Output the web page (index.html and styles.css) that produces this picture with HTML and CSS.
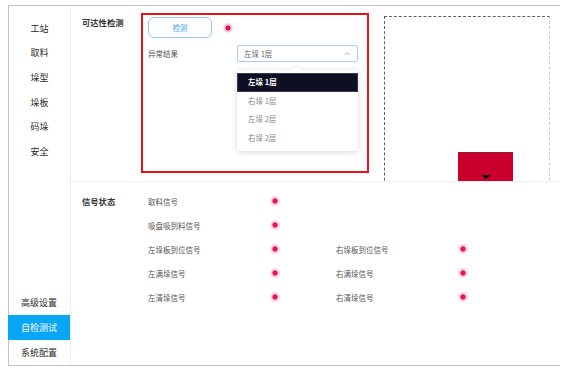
FILE: index.html
```html
<!DOCTYPE html>
<html lang="zh-CN">
<head>
    <meta charset="UTF-8">
    <meta name="viewport" content="width=device-width, initial-scale=1.0">
    <title>自检测试</title>
    <link rel="stylesheet" href="styles.css">
</head>
<body>
    <div class="frame">
        <!-- Left menu -->
        <div class="sidebar">
            <div class="menu">
                <div class="menu-item">工站</div>
                <div class="menu-item">取料</div>
                <div class="menu-item">垛型</div>
                <div class="menu-item">垛板</div>
                <div class="menu-item">码垛</div>
                <div class="menu-item">安全</div>
            </div>
            <div class="menu menu-bottom">
                <div class="menu-item tall">高级设置</div>
                <div class="menu-item tall active">自检测试</div>
                <div class="menu-item tall">系统配置</div>
            </div>
        </div>

        <div class="main">
            <!-- Reachability check -->
            <div class="section reach">
                <div class="sec-label">可达性检测</div>
                <div class="check-box">
                    <div class="check-row">
                        <button class="btn-check">检测</button>
                        <span class="dot dot-gap"></span>
                    </div>
                    <div class="result-row">
                        <span class="field-label">异常结果</span>
                        <div class="select">
                            <span>左垛 1层</span>
                            <svg class="chevron" width="7" height="5" viewBox="0 0 7 5">
                                <polyline points="0.8,4 3.5,1.3 6.2,4" fill="none" stroke="#aaa" stroke-width="0.9"/>
                            </svg>
                            <div class="dropdown">
                                <div class="caret"></div>
                                <div class="option selected">左垛 1层</div>
                                <div class="option">右垛 1层</div>
                                <div class="option">左垛 2层</div>
                                <div class="option">右垛 2层</div>
                            </div>
                        </div>
                    </div>
                </div>
                <div class="canvas">
                    <div class="pallet">
                        <span class="arrow"></span>
                    </div>
                </div>
            </div>

            <!-- Signal status -->
            <div class="section signals">
                <div class="sec-label sig-label">信号状态</div>
                <div class="sig-list">
                    <div class="sig-row">
                        <div class="sig"><span class="sig-name">取料信号</span><span class="dot"></span></div>
                    </div>
                    <div class="sig-row">
                        <div class="sig"><span class="sig-name">吸盘吸到料信号</span><span class="dot"></span></div>
                    </div>
                    <div class="sig-row">
                        <div class="sig"><span class="sig-name">左垛板到位信号</span><span class="dot"></span></div>
                        <div class="sig"><span class="sig-name">右垛板到位信号</span><span class="dot"></span></div>
                    </div>
                    <div class="sig-row">
                        <div class="sig"><span class="sig-name">左满垛信号</span><span class="dot"></span></div>
                        <div class="sig"><span class="sig-name">右满垛信号</span><span class="dot"></span></div>
                    </div>
                    <div class="sig-row">
                        <div class="sig"><span class="sig-name">左清垛信号</span><span class="dot"></span></div>
                        <div class="sig"><span class="sig-name">右清垛信号</span><span class="dot"></span></div>
                    </div>
                </div>
            </div>
        </div>
    </div>
</body>
</html>
```

FILE: styles.css
```css
body {
    margin: 5px 8px;
    background: #fff;
    font-family: "Noto Sans CJK SC", "Noto Sans", sans-serif;
    color: #333;
}
.frame {
    width: 553px;
    height: 361px;
    box-sizing: border-box;
    border: 1px solid #c4c4c4;
    display: flex;
}
.sidebar {
    width: 62px;
    flex-shrink: 0;
    box-sizing: border-box;
    border-right: 1px solid #eeeeee;
    display: flex;
    flex-direction: column;
    justify-content: space-between;
}
.menu {
    padding-top: 10.5px;
}
.menu-bottom {
    padding-top: 0;
    margin-left: -1px;
}
.menu-item {
    height: 24.7px;
    line-height: 24.7px;
    text-align: center;
    font-size: 9px;
    color: #2a2a2a;
}
.menu-item.tall {
    height: 25px;
    line-height: 25px;
}
.menu-item.active {
    background: #0aa6f6;
    color: #fff;
}
.main {
    flex: 1;
    display: flex;
    flex-direction: column;
}
.section {
    display: flex;
    box-sizing: border-box;
}
.reach {
    height: 176px;
    padding-top: 7px;
    border-bottom: 1px solid #efefef;
    overflow: hidden;
}
.sec-label {
    width: 70px;
    flex-shrink: 0;
    box-sizing: border-box;
    padding: 3px 0 0 11px;
    line-height: 12px;
    font-size: 8.3px;
    font-weight: bold;
    color: #333;
}
.check-box {
    width: 228px;
    height: 160px;
    flex-shrink: 0;
    box-sizing: border-box;
    border: 2px solid #e3141c;
    padding: 2px 5px;
}
.check-row {
    display: flex;
    align-items: center;
    height: 21px;
}
.btn-check {
    width: 64px;
    height: 21px;
    border: 1px solid #8fc8ee;
    border-radius: 6px;
    background: #fff;
    color: #3fa3e8;
    font-family: inherit;
    font-size: 7.5px;
    padding: 0;
}
.dot {
    width: 10px;
    height: 10px;
    flex-shrink: 0;
    border-radius: 50%;
    background: radial-gradient(circle, #e8144a 0 2.2px, #fbc3d1 2.9px, #fde2e9 5px);
}
.dot-gap {
    margin-left: 11px;
}
.result-row {
    display: flex;
    align-items: center;
    margin-top: 7px;
    height: 17px;
}
.field-label {
    width: 89px;
    font-size: 7.5px;
    color: #555;
}
.select {
    position: relative;
    width: 121px;
    height: 17px;
    box-sizing: border-box;
    border: 1px solid #a9d0f2;
    border-radius: 2px;
    padding: 0 6px;
    display: flex;
    align-items: center;
    justify-content: space-between;
    font-size: 7.5px;
    color: #666;
}
.dropdown {
    position: absolute;
    top: 24px;
    left: -1px;
    width: 121px;
    padding: 3px 0 4px;
    background: #fff;
    border-radius: 2px;
    box-shadow: 0 1px 6px rgba(0, 0, 0, 0.16);
}
.caret {
    position: absolute;
    top: -3px;
    left: 57px;
    width: 6px;
    height: 6px;
    background: #fff;
    transform: rotate(45deg);
    box-shadow: -1px -1px 2px rgba(0, 0, 0, 0.06);
}
.option {
    position: relative;
    height: 18.5px;
    line-height: 18.5px;
    padding-left: 11px;
    font-size: 7.5px;
    color: #888;
}
.option.selected {
    background: #0f0f24;
    color: #fff;
    font-weight: bold;
    box-shadow: inset 0 0 0 1px #3a3a52;
}
.canvas {
    position: relative;
    width: 166px;
    height: 200px;
    flex-shrink: 0;
    box-sizing: border-box;
    margin: 3px 0 0 15px;
    border-top: 1px dashed #5a6070;
    border-left: 1px dashed #5a6070;
    border-right: 1px dashed #cccccc;
}
.pallet {
    position: absolute;
    left: 73px;
    top: 135px;
    width: 55px;
    height: 40px;
    background: #c9002b;
    border-top: 1px solid #8a1a30;
    display: flex;
    justify-content: center;
}
.arrow {
    margin-top: 22px;
    width: 0;
    height: 0;
    border-left: 5px solid transparent;
    border-right: 5px solid transparent;
    border-top: 4px solid #111;
}
.signals {
    padding-top: 7px;
}
.sig-label {
    width: 77px;
    padding-top: 0;
    line-height: 25px;
}
.sig-row {
    display: flex;
    height: 24px;
    align-items: center;
}
.sig {
    width: 188px;
    display: flex;
    align-items: center;
}
.sig-name {
    width: 122px;
    font-size: 7.5px;
    color: #555;
}
```
